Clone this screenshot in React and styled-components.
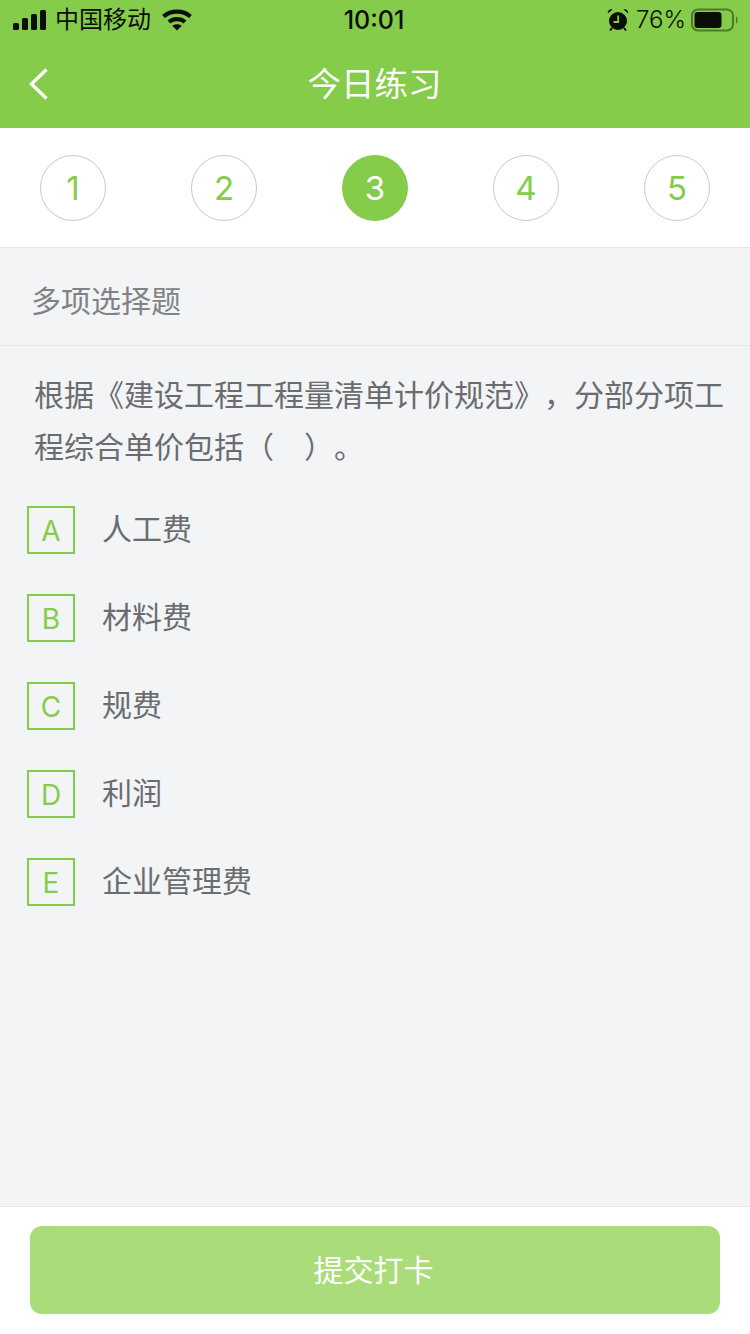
import React from 'react';
import styled, { createGlobalStyle } from 'styled-components';

const GlobalStyle = createGlobalStyle`
	html, body {
		margin: 0;
		padding: 0;
		background: #f2f4f6;
	}
	* {
		box-sizing: border-box;
	}
`;

const FONT = `"Liberation Sans", "Noto Sans CJK SC", sans-serif`;
const LATIN = `Inter, "Liberation Sans", "Noto Sans CJK SC", sans-serif`;
const GREEN = '#85cc4b';

const Page = styled.div`
	width: 750px;
	height: 1334px;
	display: flex;
	flex-direction: column;
	background: #f2f4f6;
	font-family: ${FONT};
	text-spacing-trim: space-all;
	overflow: hidden;
`;

const Header = styled.header`
	height: 128px;
	flex: none;
	background: ${GREEN};
	display: flex;
	flex-direction: column;
`;

const StatusBar = styled.div`
	height: 40px;
	display: grid;
	grid-template-columns: 1fr auto 1fr;
	align-items: center;
	color: #0b0f06;
	padding: 0 12px 0 13px;
`;

const StatusLeft = styled.div`
	display: flex;
	align-items: center;
`;

const StatusRight = styled.div`
	display: flex;
	align-items: center;
	justify-content: flex-end;
`;

const Carrier = styled.span`
	font-size: 24px;
	line-height: 40px;
	margin: 0 11px 0 8px;
`;

const Clock = styled.span`
	font-family: ${LATIN};
	font-size: 25px;
	font-weight: 500;
	line-height: 40px;
	margin: 0 3px 0 0;
`;

const Percent = styled.span`
	font-family: ${LATIN};
	font-size: 24px;
	font-weight: 300;
	line-height: 40px;
	margin: 0 5px 0 7px;
`;

const NavBar = styled.div`
	flex: 1;
	display: flex;
	align-items: center;
	justify-content: center;
	position: relative;
	padding: 2px 1px 0 0;
`;

const BackButton = styled.div`
	position: absolute;
	left: 28px;
	top: 27px;
	display: flex;
`;

const NavTitle = styled.h1`
	margin: 0;
	font-size: 33.5px;
	font-weight: 400;
	color: #fff;
	line-height: 44px;
`;

const Steps = styled.div`
	height: 120px;
	flex: none;
	background: #fff;
	border-bottom: 1px solid #e4e6e8;
	display: flex;
	justify-content: space-between;
	align-items: center;
	padding: 0 40px 0;
`;

const Step = styled.div`
	width: 66px;
	height: 66px;
	border-radius: 50%;
	display: flex;
	align-items: center;
	justify-content: center;
	font-family: ${LATIN};
	font-weight: 400;
	font-size: 33px;
	border: 1px solid ${(p) => (p.$active ? GREEN : '#c9c9c9')};
	background: ${(p) => (p.$active ? GREEN : '#fff')};
	color: ${(p) => (p.$active ? '#fff' : GREEN)};
`;

const TypeLabel = styled.div`
	height: 98px;
	flex: none;
	padding: 4px 0 0 31px;
	display: flex;
	align-items: center;
	font-size: 30px;
	color: #808285;
	border-bottom: 1px solid #e4e6e8;
`;

const Question = styled.p`
	margin: 0;
	padding: 24px 20px 0 34px;
	font-size: 30px;
	line-height: 52px;
	color: #6a6c6f;
`;

const Options = styled.div`
	flex: 1;
	display: flex;
	flex-direction: column;
	gap: 40px;
	padding: 32px 0 0 27px;
`;

const Option = styled.div`
	display: flex;
	align-items: center;
	height: 48px;
`;

const OptionKey = styled.div`
	width: 48px;
	height: 48px;
	flex: none;
	border: 2px solid ${GREEN};
	display: flex;
	align-items: center;
	justify-content: center;
	font-family: ${LATIN};
	font-weight: 400;
	font-size: 28px;
	padding-top: 2px;
	color: ${GREEN};
`;

const OptionText = styled.span`
	margin-left: 27px;
	font-size: 30px;
	color: #6a6c6f;
	position: relative;
	top: -3px;
`;

const Footer = styled.footer`
	height: 128px;
	flex: none;
	background: #fff;
	border-top: 1px solid #e4e6e8;
	padding: 19px 30px 0;
`;

const SubmitButton = styled.button`
	width: 100%;
	height: 88px;
	border: none;
	border-radius: 12px;
	background: #aadc7a;
	color: #fff;
	font-family: ${FONT};
	font-size: 30px;
	padding: 0 3px 4px 0;
`;

const SignalIcon = () => (
	<svg width="34" height="20" viewBox="0 0 34 20" fill="#0b0f06">
		<rect x="0" y="13" width="6" height="7" rx="1.5" />
		<rect x="9" y="8" width="6" height="12" rx="1.5" />
		<rect x="18" y="4" width="6" height="16" rx="1.5" />
		<rect x="27" y="0" width="6" height="20" rx="1.5" />
	</svg>
);

const WifiIcon = () => (
	<svg width="30" height="22" viewBox="0 0 30 22" fill="none" stroke="#0b0f06" strokeWidth="4.2">
		<path d="M1.5 7.5C9 1 21 1 28.5 7.5" />
		<path d="M7 13c4.5-3.8 11.5-3.8 16 0" />
		<path d="M15 21.5l-4.8-4.8c2.8-2 6.8-2 9.6 0z" fill="#0b0f06" stroke="none" />
	</svg>
);

const AlarmIcon = () => (
	<svg width="22" height="24" viewBox="0 0 22 24" fill="#0b0f06">
		<circle cx="11" cy="13" r="9" />
		<path d="M.8 5.5C.4 2.6 3 .6 5.6 1.6zM21.2 5.5C21.6 2.6 19 .6 16.4 1.6z" />
		<path d="M5 20l-2 2.5M17 20l2 2.5" stroke="#0b0f06" strokeWidth="2" />
		<path d="M11.2 7.5v6.5H6.5" fill="none" stroke={GREEN} strokeWidth="1.8" />
	</svg>
);

const BatteryIcon = () => (
	<svg width="47" height="24" viewBox="0 0 47 24" fill="none">
		<rect x="1" y="1.5" width="41" height="21" rx="6" stroke="#4c7a2b" strokeWidth="2" />
		<rect x="3.5" y="4" width="27" height="16" rx="3" fill="#0b0f06" />
		<path d="M45 8.5c1.3.6 1.6 2 1.6 3.5s-.3 2.9-1.6 3.5z" fill="#4c7a2b" />
	</svg>
);

const BackIcon = () => (
	<svg width="22" height="34" viewBox="0 0 22 34" fill="none" stroke="#fff" strokeWidth="3.4">
		<path d="M18.5 2.5 3.5 17l15 14.5" />
	</svg>
);

const STEPS = [1, 2, 3, 4, 5];
const OPTIONS = [
	{ key: 'A', text: '人工费' },
	{ key: 'B', text: '材料费' },
	{ key: 'C', text: '规费' },
	{ key: 'D', text: '利润' },
	{ key: 'E', text: '企业管理费' },
];

const App = () => {
	return (
		<Page>
			<GlobalStyle />
			<Header>
				<StatusBar>
					<StatusLeft>
						<SignalIcon />
						<Carrier>中国移动</Carrier>
						<WifiIcon />
					</StatusLeft>
					<Clock>10:01</Clock>
					<StatusRight>
						<AlarmIcon />
						<Percent>76%</Percent>
						<BatteryIcon />
					</StatusRight>
				</StatusBar>
				<NavBar>
					<BackButton>
						<BackIcon />
					</BackButton>
					<NavTitle>今日练习</NavTitle>
				</NavBar>
			</Header>
			<Steps>
				{STEPS.map((n) => (
					<Step key={n} $active={n === 3}>
						{n}
					</Step>
				))}
			</Steps>
			<TypeLabel>多项选择题</TypeLabel>
			<Question>根据《建设工程工程量清单计价规范》，分部分项工程综合单价包括（　）。</Question>
			<Options>
				{OPTIONS.map((o) => (
					<Option key={o.key}>
						<OptionKey>{o.key}</OptionKey>
						<OptionText>{o.text}</OptionText>
					</Option>
				))}
			</Options>
			<Footer>
				<SubmitButton>提交打卡</SubmitButton>
			</Footer>
		</Page>
	);
};

export default App;
